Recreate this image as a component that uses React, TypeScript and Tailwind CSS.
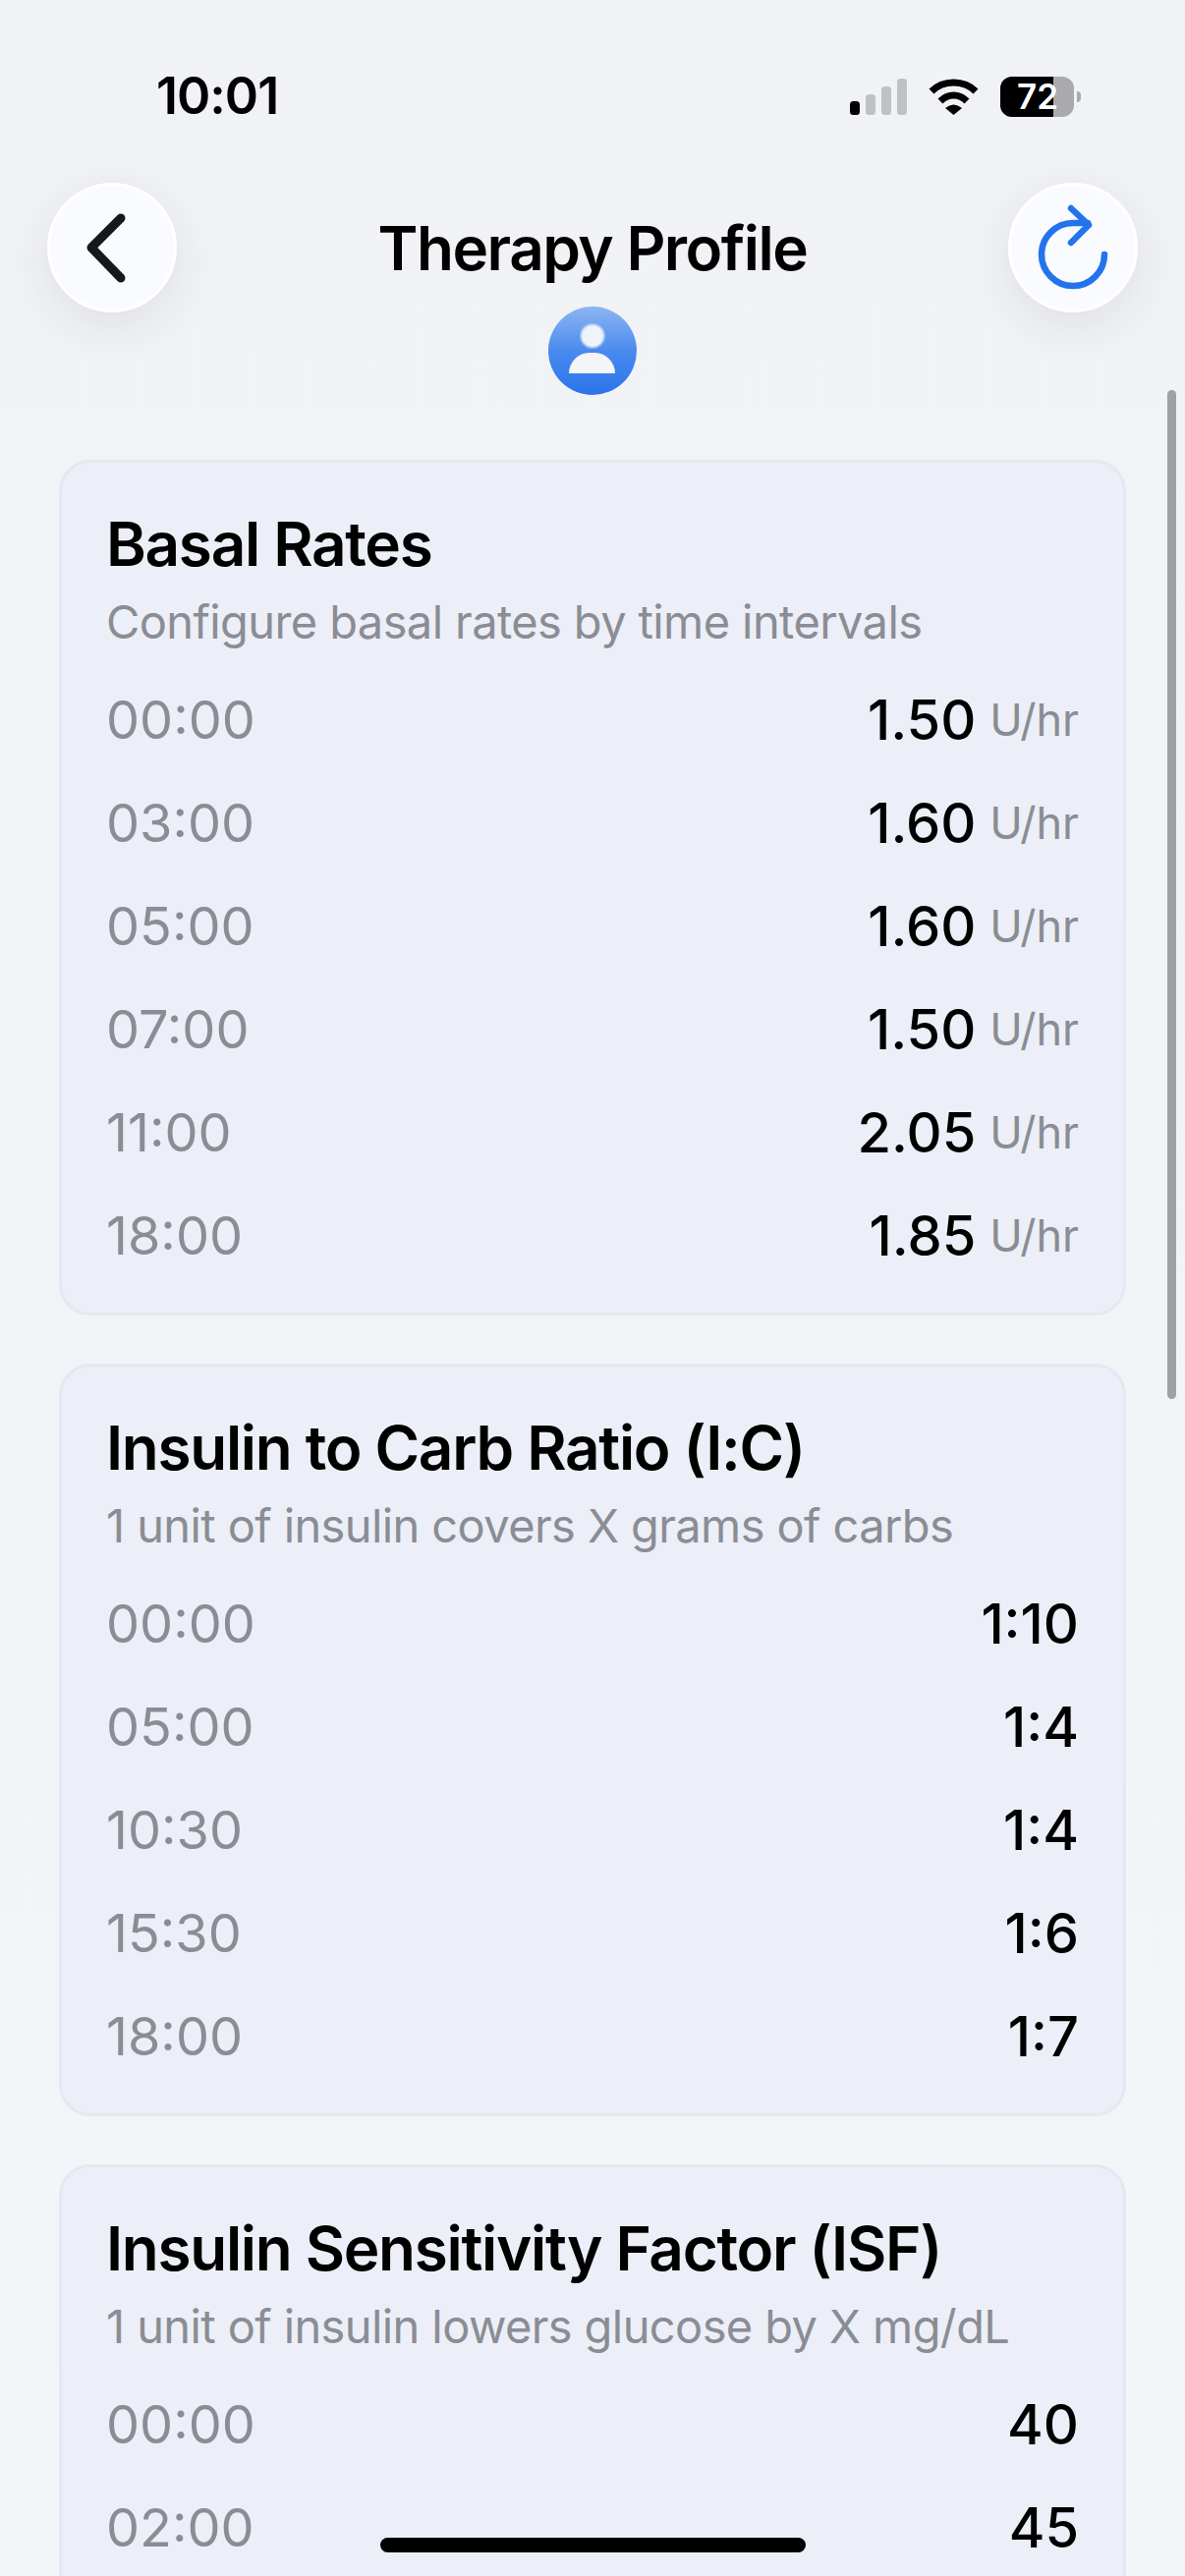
const fontStack = { fontFamily: '"Inter", "Liberation Sans", sans-serif' };

const basalRates = [
  ['00:00', '1.50'],
  ['03:00', '1.60'],
  ['05:00', '1.60'],
  ['07:00', '1.50'],
  ['11:00', '2.05'],
  ['18:00', '1.85'],
];

const carbRatios = [
  ['00:00', '1:10'],
  ['05:00', '1:4'],
  ['10:30', '1:4'],
  ['15:30', '1:6'],
  ['18:00', '1:7'],
];

const sensitivity = [
  ['00:00', '40'],
  ['02:00', '45'],
];

function StatusBar() {
  return (
    <div className="flex h-[186px] items-center justify-between pt-[10px] pl-[159px] pr-[106px]">
      <span className="text-[52px] font-semibold leading-none tracking-[-1px] text-black">10:01</span>
      <div className="flex items-center">
        <svg width="58" height="37" viewBox="0 0 58 37" className="mr-[22px]">
          <rect x="0" y="23" width="10" height="14" rx="3.5" fill="#000" />
          <rect x="16" y="16" width="10" height="21" rx="3.5" fill="#bfc1c6" />
          <rect x="32" y="8" width="10" height="29" rx="3.5" fill="#bfc1c6" />
          <rect x="48" y="0" width="10" height="37" rx="3.5" fill="#bfc1c6" />
        </svg>
        <svg width="51" height="37" viewBox="0 0 51 37" className="mr-[22px]" fill="none">
          <path d="M3 13 C15 1 36 1 48 13" stroke="#000" strokeWidth="7" />
          <path d="M12 23 C20 15 31 15 39 23" stroke="#000" strokeWidth="7" />
          <path d="M17 30 Q25.5 23 34 30 L25.5 37 Z" fill="#000" />
        </svg>
        <div className="relative flex h-[41px] w-[75px] items-center overflow-hidden rounded-[12px] bg-[#a9aaae]">
          <div className="absolute inset-y-0 left-0 w-[54px] bg-black" />
          <span className="relative ml-[17px] text-[35px] font-semibold leading-none text-white">72</span>
        </div>
        <div className="ml-[3px] h-[11px] w-[4px] rounded-r-full bg-[#a9aaae]" />
      </div>
    </div>
  );
}

function CircleButton({ children }: { children: React.ReactNode }) {
  return (
    <button className="h-[132px] w-[132px] rounded-full border-[3px] border-white bg-[#fafbff] shadow-[0_14px_50px_rgba(40,45,60,0.09)]">
      {children}
    </button>
  );
}

function Header() {
  return (
    <div className="flex items-start justify-between px-[48px] pb-[66px]">
      <CircleButton>
        <svg width="126" height="126" viewBox="0 0 126 126" fill="none" className="block">
          <path d="M72 33 L42 63 L72 94" stroke="#17181c" strokeWidth="9" strokeLinecap="round" strokeLinejoin="round" />
        </svg>
      </CircleButton>
      <div className="flex flex-col items-center">
        <h1 className="flex h-[126px] items-center pt-[6px] text-[62px] font-semibold tracking-[-1.5px] text-black">Therapy Profile</h1>
        <div className="relative h-[90px] w-[90px] overflow-hidden rounded-full bg-gradient-to-b from-[#8db5f1] via-[#4a8aee] to-[#2a74ea] blur-[0.6px]">
          <div className="absolute left-[33px] top-[18px] h-[24px] w-[24px] rounded-full bg-[#f0f3fa] blur-[1px]" />
          <div className="absolute left-[21px] top-[47px] h-[21px] w-[47px] rounded-t-full bg-[#f3f5f9]" />
        </div>
      </div>
      <CircleButton>
        <svg width="126" height="126" viewBox="0 0 126 126" fill="none" className="block">
          <path d="M95 70 A32 32 0 1 1 63 38 H78" stroke="#2374ec" strokeWidth="6.5" strokeLinecap="round" />
          <path d="M61 23 L79 40 L61 58" stroke="#2374ec" strokeWidth="6.5" strokeLinecap="round" strokeLinejoin="round" />
        </svg>
      </CircleButton>
    </div>
  );
}

function ProfileCard({ title, subtitle, rows, unit }: { title: string; subtitle: string; rows: string[][]; unit?: string }) {
  return (
    <section className="rounded-[32px] border-[3px] border-[#e4e8f0] bg-[#eceff7] pl-[45px] pr-[45px] pt-[48px] pb-[26px]">
      <h2 className="text-[62px] font-semibold leading-[70px] tracking-[-1.3px] text-black">{title}</h2>
      <p className="mt-[14px] mb-[17px] text-[47px] leading-[60px] tracking-[-0.6px] text-[#8a8d94]">{subtitle}</p>
      {rows.map(([time, value], i) => (
        <div key={i} className="flex h-[105px] items-center justify-between">
          <span className="text-[54px] text-[#8a8d94]">{time}</span>
          <div className="flex items-center gap-[14px]">
            <span className="text-[56px] font-medium text-black">{value}</span>
            {unit && <span className="text-[45px] text-[#8a8d94]">{unit}</span>}
          </div>
        </div>
      ))}
    </section>
  );
}

export default function App() {
  return (
    <div className="relative h-[2622px] w-[1206px] overflow-hidden bg-gradient-to-b from-[#f1f2f6] to-[#f3f5f9]" style={fontStack}>
      <StatusBar />
      <Header />
      <div className="flex flex-col gap-[49px] px-[60px]">
        <ProfileCard title="Basal Rates" subtitle="Configure basal rates by time intervals" rows={basalRates} unit="U/hr" />
        <ProfileCard title="Insulin to Carb Ratio (I:C)" subtitle="1 unit of insulin covers X grams of carbs" rows={carbRatios} />
        <ProfileCard title="Insulin Sensitivity Factor (ISF)" subtitle="1 unit of insulin lowers glucose by X mg/dL" rows={sensitivity} />
      </div>
      {/* scroll indicator */}
      <div className="absolute right-[9px] top-[397px] h-[1027px] w-[9px] rounded-full bg-[#a0a1a4]" />
      {/* home indicator */}
      <div className="absolute left-[387px] top-[2583px] h-[15px] w-[433px] rounded-full bg-black" />
    </div>
  );
}
